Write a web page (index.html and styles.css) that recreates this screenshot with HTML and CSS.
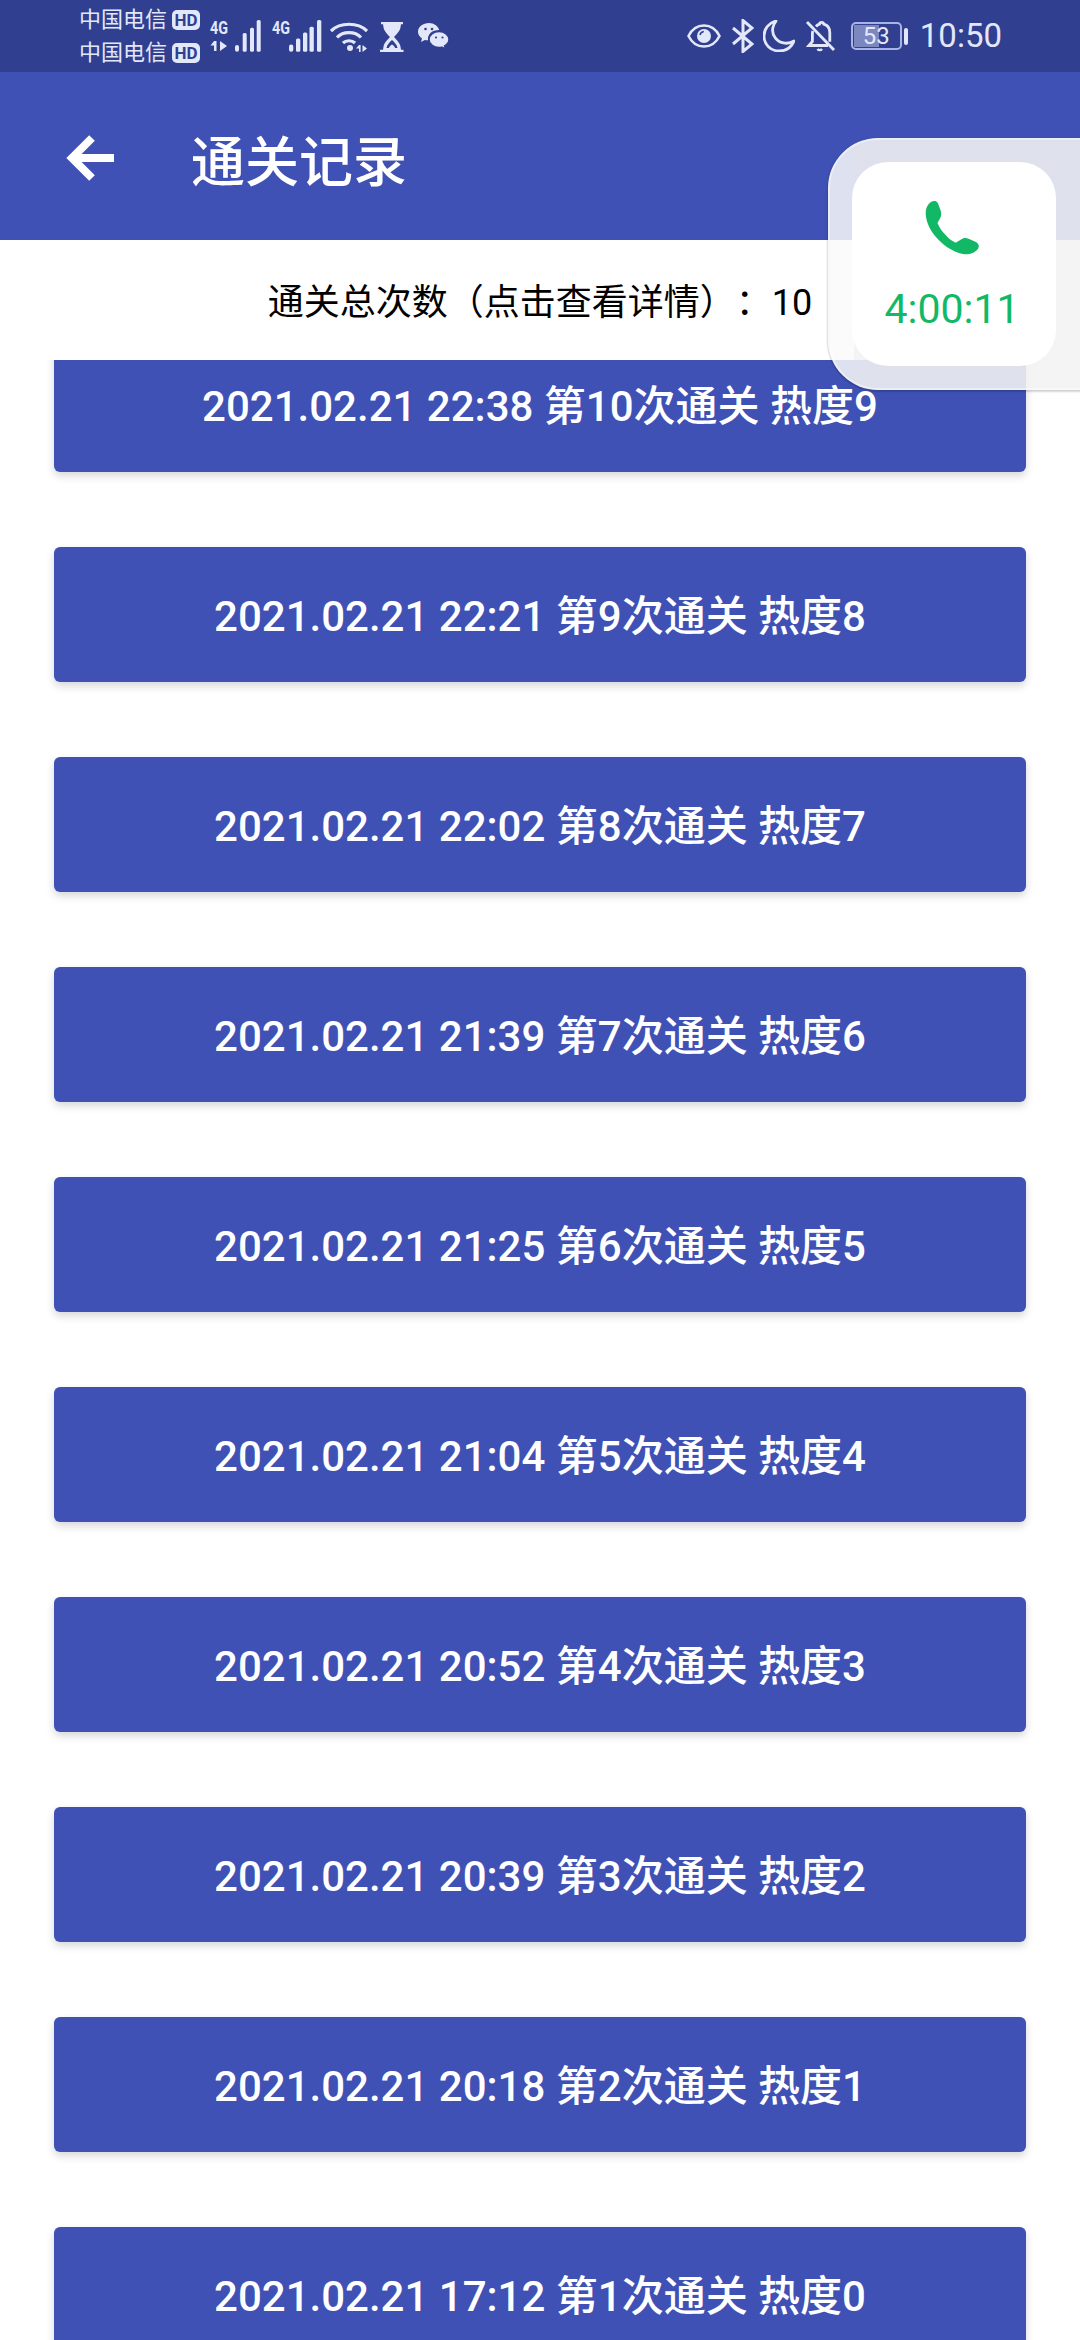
FILE: index.html
```html
<!DOCTYPE html>
<html lang="zh-CN">
<head>
    <meta charset="UTF-8">
    <meta name="viewport" content="width=device-width, initial-scale=1.0">
    <title>通关记录</title>
    <link rel="stylesheet" href="styles.css">
</head>
<body>
    <div id="app">
        <div class="status-bar">
            <div class="status-left">
                <div class="carriers">
                    <div class="carrier">中国电信<span class="hd">HD</span></div>
                    <div class="carrier">中国电信<span class="hd">HD</span></div>
                </div>
                <svg class="sig" width="51" height="36" viewBox="0 -4 51 36">
                    <text x="0" y="14" class="sig-text" textLength="18" lengthAdjust="spacingAndGlyphs">4G</text>
                    <path d="M4 21h2.500v10H4zM.5 25.500L4 21v4.500zM10 21l7 5-7 5z" fill="#e3e7fa"/>
                    <rect x="25" y="25" width="4" height="6.700" rx="2" fill="#e3e7fa"/>
                    <rect x="32.700" y="13" width="4" height="18.700" rx="1.500" fill="#e3e7fa"/>
                    <rect x="40" y="7.700" width="4" height="24" rx="1.500" fill="#e3e7fa"/>
                    <rect x="46.700" y="0" width="4" height="31.700" rx="1.500" fill="#e3e7fa"/>
                </svg>
                <svg class="sig sig-b" width="50" height="36" viewBox="0 -4 50 36">
                    <text x="0" y="14" class="sig-text" textLength="18" lengthAdjust="spacingAndGlyphs">4G</text>
                    <rect x="17" y="24.500" width="4.300" height="7.200" rx="2" fill="#e3e7fa"/>
                    <rect x="24" y="18.500" width="4.300" height="13.200" rx="1.500" fill="#e3e7fa"/>
                    <rect x="31" y="12.500" width="4.300" height="19.200" rx="1.500" fill="#e3e7fa"/>
                    <rect x="37.500" y="6.700" width="4.300" height="25" rx="1.500" fill="#e3e7fa"/>
                    <rect x="45" y="0" width="4.300" height="31.700" rx="1.500" fill="#e3e7fa"/>
                </svg>
                <svg class="wifi" width="38" height="32" viewBox="0 0 38 32" fill="none" stroke="#e3e7fa" stroke-width="3.2">
                    <path d="M1 10C10 1 28 1 37 10"/>
                    <path d="M7 16.500C13 10 25 10 31 16.500"/>
                    <path d="M13 22C16 19 22 19 25 22"/>
                    <circle cx="20" cy="27" r="3" fill="#e3e7fa" stroke="none"/>
                    <path d="M29 24v7h1.600v-7zM26 27.500l3-3.500v3.500zM32.500 24l4.500 3.500-4.500 3.500z" fill="#e3e7fa" stroke="none"/>
                </svg>
                <svg class="glass" width="24" height="32" viewBox="0 0 24 32">
                    <path d="M1 1h22v2.200h-2l-.5 3c-.5 4-4 7-6.500 9.800 2.500 2.800 6 5.800 6.500 9.800l.5 3h2.500V31H0v-2.200h3l.5-3c.5-4 4-7 6.500-9.800C7.500 13.200 4 10.200 3.500 6.200L3 3.200H1z" fill="#e3e7fa"/>
                    <path d="M12 19c-2 2-5 4.500-5.500 8L17.500 27C17 23.500 14 21 12 19z" fill="#303f8f"/>
                    <path d="M12 23.500c-1.500 1-3 2-3.500 5h7c-.5-3-2-4-3.500-5z" fill="#e3e7fa"/>
                </svg>
                <svg class="wechat" width="32" height="28" viewBox="0 0 32 28">
                    <path d="M11 1C5 1 0 4.900 0 9.800c0 2.700 1.500 5 4 6.700L3 20l3.800-2.100c1 .3 2 .4 3.200.4C9.500 12 14 8 21.200 8 20 4 16 1 11 1z" fill="#e3e7fa"/>
                    <path d="M21 9.500c-5.500 0-10 3.600-10 8s4.500 8 10 8c1 0 2-.1 2.900-.4l3.600 2-.9-3.300c2.700-1.500 4.400-3.800 4.400-6.300 0-4.400-4.500-8-10-8z" fill="#e3e7fa" stroke="#303f8f" stroke-width="1.500"/>
                    <circle cx="7.500" cy="7" r="1.300" fill="#303f8f"/>
                    <circle cx="14" cy="7" r="1.300" fill="#303f8f"/>
                    <circle cx="18" cy="15.500" r="1.100" fill="#303f8f"/>
                    <circle cx="24.500" cy="15.500" r="1.100" fill="#303f8f"/>
                </svg>
            </div>
            <div class="status-right">
                <svg width="34" height="26" viewBox="0 0 34 26">
                    <path d="M1.500 13C5 6 10.500 2.500 17 2.500S29 6 32.500 13C29 20 23.500 23.500 17 23.500S5 20 1.500 13z" fill="none" stroke="#e3e7fa" stroke-width="2.600"/>
                    <circle cx="17" cy="13" r="7" fill="#e3e7fa"/>
                    <path d="M13 12c.4-2 1.800-3.300 3.800-3.600" fill="none" stroke="#303f8f" stroke-width="1.500"/>
                </svg>
                <svg width="22" height="34" viewBox="0 0 22 34" fill="none" stroke="#e3e7fa" stroke-width="3">
                    <path d="M1 9l19 16-9 7.500V1.500l9 7.500L1 25"/>
                </svg>
                <svg class="moon" width="32" height="32" viewBox="0 0 32 32">
                    <path d="M13 1C5.500 3 1 9 1 16c0 8.500 6.800 15 15 15 7 0 12.500-3.700 15-10-2.800 1.800-6 2.500-9 2.200C14 22.500 8.500 15.500 9.800 8 10.300 5.500 11.300 3 13 1z" fill="none" stroke="#e3e7fa" stroke-width="2.800" stroke-linejoin="round"/>
                </svg>
                <svg width="30" height="32" viewBox="0 0 30 32" fill="none" stroke="#e3e7fa" stroke-width="2.800">
                    <path d="M1 2l27 28"/>
                    <path d="M10 6.500c1-1.200 2.500-2 3.500-2.300.2-2.500 4-2.500 4.300 0 3.800 1 6 4.500 6 8.500v9"/>
                    <path d="M6.800 11c-.3 1-.4 2-.4 3v7.500L3 25.500h19"/>
                    <path d="M11.500 29c1 1.500 3.500 1.500 4.500 0" stroke-width="2.400"/>
                </svg>
                <div class="battery">
                    <div class="battery-body"><span class="battery-fill"></span><span class="battery-num">53</span></div>
                    <span class="battery-tip"></span>
                </div>
                <span class="clock">10:50</span>
            </div>
        </div>

        <div class="toolbar">
            <svg class="back" width="72" height="72" viewBox="0 0 72 72" fill="none" stroke="#fff" stroke-width="8">
                <path d="M60 36H20M38 16L18 36l20 20"/>
            </svg>
            <h1 class="title">通关记录</h1>
        </div>

        <div class="summary">通关总次数（点击查看详情）：10</div>

        <div class="list">
            <div class="record">2021.02.21 22:38 第10次通关 热度9</div>
            <div class="record">2021.02.21 22:21 第9次通关 热度8</div>
            <div class="record">2021.02.21 22:02 第8次通关 热度7</div>
            <div class="record">2021.02.21 21:39 第7次通关 热度6</div>
            <div class="record">2021.02.21 21:25 第6次通关 热度5</div>
            <div class="record">2021.02.21 21:04 第5次通关 热度4</div>
            <div class="record">2021.02.21 20:52 第4次通关 热度3</div>
            <div class="record">2021.02.21 20:39 第3次通关 热度2</div>
            <div class="record">2021.02.21 20:18 第2次通关 热度1</div>
            <div class="record">2021.02.21 17:12 第1次通关 热度0</div>
        </div>

        <!-- 悬浮通话窗口 -->
        <div class="float-panel">
            <div class="call-card">
                <svg class="call-icon" width="60" height="60" viewBox="0 0 60 60">
                    <path d="M10 3C6 3 1.700 8 1.700 15c0 7 3.300 16 10 23.700C18 46 28 54 39 56c5 1 10 0 14-4 3-3 2-6-1-8l-8-3.500c-3-1-5-.5-7 1l-5.300 3.200c-3.700-1.700-6.700-3.700-10-7.700-3.700-3.500-6.700-8-8.200-12l2.500-4.500c1.500-2.500 1.500-5.500.5-8.500L14 5.500C13 3.500 12 3 10 3z" fill="#12b866"/>
                </svg>
                <div class="call-time">4:00:11</div>
            </div>
        </div>
    </div>
</body>
</html>
```

FILE: styles.css
```css
body {
    margin: 0;
    font-family: Roboto, "Noto Sans CJK SC", sans-serif;
}
#app {
    position: relative;
    display: flex;
    flex-direction: column;
    width: 1080px;
    height: 2340px;
    overflow: hidden;
    background: #fff;
}
.status-bar {
    display: flex;
    align-items: center;
    justify-content: space-between;
    flex: none;
    height: 72px;
    padding: 0 78px 0 79px;
    background: #303f8f;
    color: #e3e7fa;
}
.status-left {
    display: flex;
    align-items: center;
}
.carriers {
    display: flex;
    flex-direction: column;
    gap: 11px;
    margin-right: 10px;
}
.carrier {
    display: flex;
    align-items: center;
    height: 22px;
    font-size: 22px;
    line-height: 22px;
}
.hd {
    width: 28px;
    height: 20px;
    margin-left: 5px;
    border-radius: 5px;
    background: #e3e7fa;
    color: #303f8f;
    font-size: 17px;
    font-weight: 700;
    line-height: 20px;
    text-align: center;
}
.sig {
    margin-top: -4px;
}
.sig-b {
    margin-left: 11px;
}
.sig-text {
    fill: #e3e7fa;
    font-family: Roboto, sans-serif;
    font-size: 18px;
    font-weight: 700;
}
.wifi {
    margin-left: 8px;
    margin-top: 2px;
}
.glass {
    margin-left: 12px;
    margin-top: 2px;
}
.wechat {
    margin-left: 14px;
}
.status-right {
    display: flex;
    align-items: center;
    gap: 11px;
}
.moon {
    margin-left: -2px;
}
.battery {
    display: flex;
    align-items: center;
    gap: 2px;
    margin-left: 4px;
}
.battery-body {
    position: relative;
    box-sizing: border-box;
    width: 51px;
    height: 28px;
    border: 2px solid #a9b3e6;
    border-radius: 5px;
}
.battery-fill {
    position: absolute;
    left: 1px;
    top: 1px;
    bottom: 1px;
    width: 25px;
    background: #7c87c0;
}
.battery-num {
    position: relative;
    display: block;
    font-size: 24px;
    line-height: 24px;
    text-align: center;
}
.battery-tip {
    width: 4px;
    height: 17px;
    border-radius: 2px;
    background: #e3e7fa;
}
.clock {
    margin-left: 1px;
    font-size: 33px;
    line-height: 40px;
}
.toolbar {
    display: flex;
    align-items: center;
    flex: none;
    height: 168px;
    padding-left: 54px;
    background: #3f51b5;
}
.back {
    margin-top: 4px;
}
.title {
    margin: 15px 0 0 65px;
    color: #fff;
    font-size: 54px;
    font-weight: 500;
    line-height: 60px;
}
.summary {
    flex: none;
    height: 120px;
    font-size: 36px;
    line-height: 126px;
    text-align: center;
    text-spacing-trim: space-all;
    color: #000;
}
.list {
    flex: 1;
    overflow: hidden;
    padding: 0 54px;
}
.record {
    height: 135px;
    margin-bottom: 75px;
    border-radius: 6px;
    background: #3f51b5;
    box-shadow: 0 4px 8px rgba(0, 0, 0, 0.16);
    color: #fff;
    font-size: 42px;
    font-weight: 500;
    line-height: 139px;
    text-align: center;
}
.record:first-child {
    margin-top: -23px;
}
.float-panel {
    position: absolute;
    left: 828px;
    top: 138px;
    box-sizing: border-box;
    width: 320px;
    height: 252px;
    padding: 22px 0 0 22px;
    border: 2px solid rgba(255, 255, 255, 0.45);
    border-radius: 50px;
    background: linear-gradient(to right, rgba(250, 250, 250, 0.85) 24px, rgba(242, 242, 242, 0.89) 24px);
    box-shadow: 0 2px 2px rgba(0, 0, 0, 0.16), -1px 0 2px rgba(0, 0, 0, 0.1);
}
.call-card {
    display: flex;
    flex-direction: column;
    align-items: center;
    width: 204px;
    height: 204px;
    border-radius: 36px;
    background: #fff;
}
.call-icon {
    margin-top: 36px;
}
.call-time {
    margin: 27px 4px 0 0;
    color: #12b866;
    font-size: 41px;
    line-height: 48px;
}
```
